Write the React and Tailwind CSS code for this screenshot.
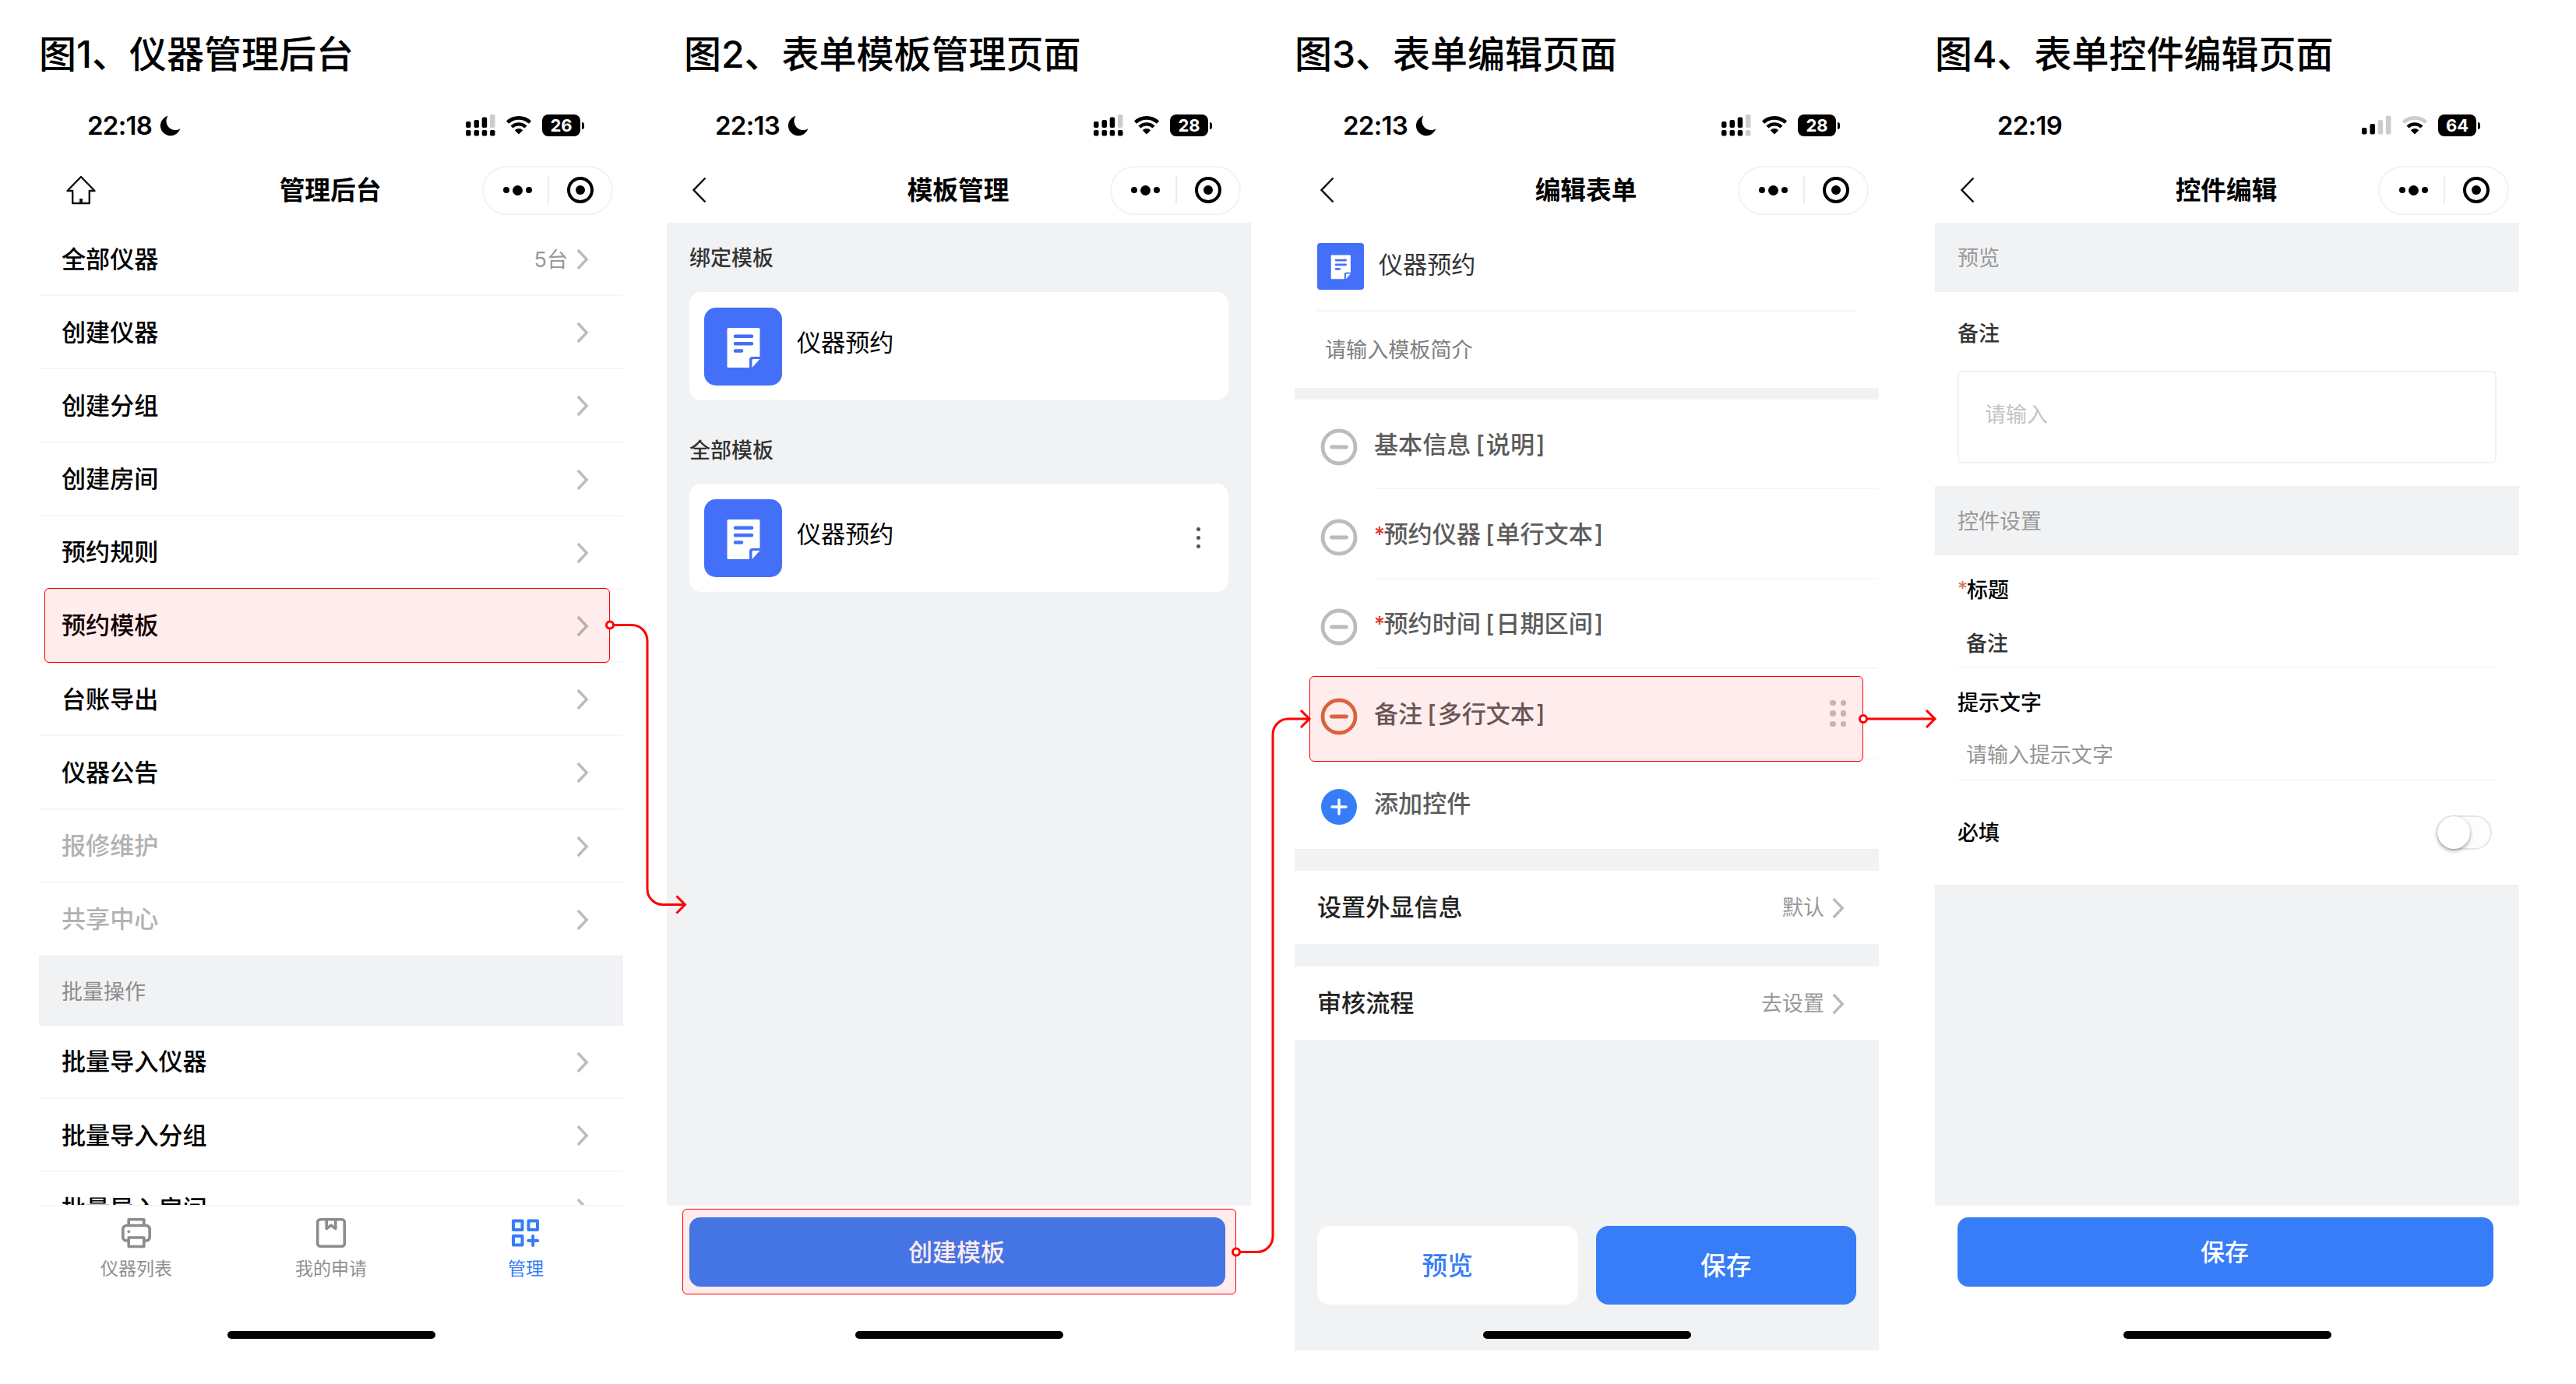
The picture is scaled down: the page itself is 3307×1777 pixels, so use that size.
const CHEVRON_LIST = [
  { label: '全部仪器', extra: '5台' },
  { label: '创建仪器' },
  { label: '创建分组' },
  { label: '创建房间' },
  { label: '预约规则' },
  { label: '预约模板', active: true },
  { label: '台账导出' },
  { label: '仪器公告' },
  { label: '报修维护', disabled: true },
  { label: '共享中心', disabled: true },
];

const BATCH_LIST = ['批量导入仪器', '批量导入分组', '批量导入房间'];

const FIELDS = [
  { name: '基本信息', type: '说明' },
  { name: '预约仪器', type: '单行文本', required: true },
  { name: '预约时间', type: '日期区间', required: true },
  { name: '备注', type: '多行文本', active: true },
];

/* ---------- icons ---------- */

const ChevronRight = () => (
  <svg width="16" height="28" viewBox="0 0 16 28" fill="none" className="shrink-0">
    <path d="M1.800 2 13.200 14 1.800 26" stroke="#bbbbbb" strokeWidth="3.400" />
  </svg>
);

const BackIcon = () => (
  <svg width="20" height="34" viewBox="0 0 20 34" fill="none">
    <path d="M17.5 1.5 2.5 17l15 15.5" stroke="#111" strokeWidth="2.5" />
  </svg>
);

const HomeIcon = () => (
  <svg width="40" height="38" viewBox="0 0 40 38" fill="none" stroke="#111" strokeWidth="2.4" strokeLinejoin="round">
    <path d="M20 2 2.5 20H9.200V36h21.600V20h6.700L20 2Z" />
    <path d="M20 30v6" strokeWidth="3.8" />
  </svg>
);

const MoonIcon = () => (
  <svg width="27" height="27" viewBox="0 0 27 27">
    <path d="M10.5.8A13 13 0 1 0 26.3 17.2 11.6 11.6 0 0 1 10.5.8Z" fill="#000" />
  </svg>
);

const DualSignal = ({ lastDim }) => (
  <svg width="38" height="28" viewBox="0 0 38 28">
    <rect x="0" y="9" width="6.5" height="8" rx="2" />
    <rect x="10.5" y="7" width="6.5" height="10" rx="2" />
    <rect x="20.7" y="3.5" width="6.5" height="13.5" rx="2" />
    <rect x="31" y="0" width="6.5" height="17" rx="2" fill="#cccccc" />
    <rect x="0" y="20" width="6.5" height="7.5" rx="2" />
    <rect x="10.5" y="20" width="6.5" height="7.5" rx="2" />
    <rect x="20.7" y="20" width="6.5" height="7.5" rx="2" />
    <rect x="31" y="20" width="6.5" height="7.5" rx="2" fill={lastDim ? '#cccccc' : '#000'} />
  </svg>
);

const SingleSignal = () => (
  <svg width="38" height="28" viewBox="0 0 38 28">
    <rect x="0" y="17" width="6.5" height="8.5" rx="2" />
    <rect x="10.5" y="12" width="6.5" height="13.5" rx="2" />
    <rect x="20.7" y="7" width="6.5" height="18.5" rx="2" fill="#cccccc" />
    <rect x="31" y="1.5" width="6.5" height="24" rx="2" fill="#cccccc" />
  </svg>
);

const WifiIcon = ({ weak }) => (
  <svg width="34" height="26" viewBox="0 0 34 26" fill="none">
    <path d="M2.5 9.2a21 21 0 0 1 29 0" stroke={weak ? '#cccccc' : '#000'} strokeWidth="4.6" />
    <path d="M8 15a13 13 0 0 1 18 0" stroke="#000" strokeWidth="4.4" />
    <path d="M17 24.5l-5.2-5.3a7.5 7.5 0 0 1 10.4 0L17 24.5Z" fill="#000" />
  </svg>
);

const DocIcon = ({ className }) => (
  <svg viewBox="0 0 100 100" className={className}>
    <path d="M31 26h39a1.5 1.5 0 0 1 1.5 1.5V63H62a4 4 0 0 0-4 4v10H31a1.5 1.5 0 0 1-1.5-1.5v-48A1.5 1.5 0 0 1 31 26Z" fill="#fff" />
    <path d="M61.5 77V67.5a1.5 1.5 0 0 1 1.5-1.5h8.5L61.5 77Z" fill="#fff" />
    <path d="M40 36.8h21M40 46.3h21M40 55.5h8" stroke="#4470f9" strokeWidth="4.6" strokeLinecap="round" />
  </svg>
);

const PrinterIcon = () => (
  <svg width="40" height="40" viewBox="0 0 40 40" fill="none" stroke="#8c8c8c" strokeWidth="3.6" strokeLinejoin="round">
    <path d="M10.2 10.500V2.700h19.600v7.800" />
    <path d="M10.200 30H7.500a4.700 4.700 0 0 1-4.700-4.700V15.200a4.700 4.700 0 0 1 4.700-4.700h25a4.700 4.700 0 0 1 4.700 4.700v10.100a4.700 4.700 0 0 1-4.700 4.700h-2.700" />
    <path d="M10.200 26h19.600v11.500H10.200z" />
    <circle cx="10.300" cy="18.300" r="1.900" fill="#8c8c8c" stroke="none" />
  </svg>
);

const BookmarkIcon = () => (
  <svg width="40" height="40" viewBox="0 0 40 40" fill="none" stroke="#8c8c8c" strokeWidth="3.6" strokeLinejoin="round">
    <rect x="2.700" y="2.700" width="34.600" height="34.600" rx="3.500" />
    <path d="M14.200 3v11.500l5.800-4.200 5.800 4.200V3" />
  </svg>
);

const GridPlusIcon = () => (
  <svg width="40" height="40" viewBox="0 0 40 40" fill="none" stroke="#367df7" strokeWidth="4" strokeLinejoin="round">
    <rect x="4" y="4.5" width="11.5" height="11.5" />
    <rect x="23.5" y="4.5" width="11.5" height="11.5" />
    <rect x="4" y="24" width="11.5" height="11.5" />
    <path d="M29.2 24v12M23.200 30h12" strokeWidth="4" strokeLinecap="round" />
  </svg>
);

const MinusCircle = ({ color }) => (
  <svg width="48" height="48" viewBox="0 0 48 48" fill="none" stroke={color} strokeWidth="4.8">
    <circle cx="24" cy="24" r="21" />
    <path d="M14.5 24h19" strokeLinecap="round" />
  </svg>
);

const PlusCircle = () => (
  <svg width="48" height="48" viewBox="0 0 48 48" fill="none">
    <circle cx="24" cy="24" r="23" fill="#367df7" />
    <path d="M24 15v18M15 24h18" stroke="#fff" strokeWidth="3.4" strokeLinecap="round" />
  </svg>
);

/* ---------- shared pieces ---------- */

const StatusBar = ({ time, battery, moon, single, dimDual }) => (
  <div className={`h-[100px] flex items-center justify-between pr-[50px] ${single ? 'pl-[80px]' : 'pl-[62px]'}`}>
    <div className="flex items-center gap-[10px]">
      <span className="font-[Inter] font-semibold text-[33px] leading-none tracking-[-0.7px]">{time}</span>
      {moon && <MoonIcon />}
    </div>
    <div className="flex items-center">
      {single ? <SingleSignal /> : <DualSignal lastDim={dimDual} />}
      <div className="ml-[13px]"><WifiIcon weak={single} /></div>
      <div className="ml-[13px] w-[49px] h-[28px] rounded-[8px] bg-black flex items-center justify-center">
        <span className="font-[Inter] font-bold text-[22px] leading-none text-white">{battery}</span>
      </div>
      <div className="ml-[2px] w-[3px] h-[9px] rounded-r-full bg-black" />
    </div>
  </div>
);

const NavBar = ({ title, home }) => (
  <div className="h-[75px] pb-[9px] grid grid-cols-[1fr_auto_1fr] items-center">
    <div className={home ? 'pl-[34px]' : 'pl-[32px]'}>{home ? <HomeIcon /> : <BackIcon />}</div>
    <h2 className="-ml-[2px] text-[32.7px] leading-none font-bold">{title}</h2>
    <div className="justify-self-end mr-[13px] w-[168px] h-[63px] rounded-full border-2 border-[#f3f3f3] flex items-center">
      <div className="w-[82px] flex items-center justify-center gap-[4px] pl-[4px]">
        <span className="size-[8px] rounded-full bg-black" />
        <span className="size-[13px] rounded-full bg-black" />
        <span className="size-[8px] rounded-full bg-black" />
      </div>
      <div className="w-[2px] h-[36px] bg-[#ececec]" />
      <div className="flex-1 flex justify-center pr-px">
        <div className="size-[34px] rounded-full border-4 border-black flex items-center justify-center">
          <span className="size-[12px] rounded-full bg-black" />
        </div>
      </div>
    </div>
  </div>
);

const HomeIndicator = () => (
  <div className="mt-auto mb-[15px] mx-auto w-[267px] h-[10px] rounded-full bg-black shrink-0" />
);

const Screen = ({ caption, captionClass = '', screenClass = '', status, nav, children }) => (
  <section className="w-[750px] shrink-0">
    <h1 className={`h-[111px] pt-[46px] text-[48px] leading-none font-medium whitespace-nowrap ${captionClass}`}>{caption}</h1>
    <div className={`h-[1623px] flex flex-col ${screenClass}`}>
      <div className="bg-white">
        <StatusBar {...status} />
        <NavBar {...nav} />
      </div>
      {children}
    </div>
  </section>
);

const ListRow = ({ label, extra, disabled, active }) => (
  <div className="relative h-[94.2px] shrink-0 border-b-2 border-[#f6f6f6] pt-[2px] pl-[29px] pr-[44px] flex items-center justify-between">
    <span className={`text-[31.1px] leading-none font-medium ${disabled ? 'text-[#b2b2b2]' : 'text-black'}`}>{label}</span>
    <div className="flex items-center gap-[11px]">
      {extra && <span className="text-[27px] leading-none text-[#999999]">{extra}</span>}
      <ChevronRight />
    </div>
    {active && <div className="absolute left-[7px] -top-[2px] w-[726px] h-[96px] rounded-[6px] border-[1.5px] border-[#ff0000] bg-[#ff0000]/[0.075]" />}
  </div>
);

const TemplateCard = ({ menu }) => (
  <div className="mx-[29px] h-[139px] rounded-[15px] bg-white flex items-center pl-[19px] pr-[36px]">
    <DocIcon className="size-[100px] rounded-[15px] bg-[#4470f9]" />
    <span className="ml-[19px] pb-[8px] text-[31.1px] leading-none">仪器预约</span>
    {menu && (
      <div className="ml-auto flex flex-col gap-[6px]">
        <span className="size-[5px] rounded-full bg-[#555]" />
        <span className="size-[5px] rounded-full bg-[#555]" />
        <span className="size-[5px] rounded-full bg-[#555]" />
      </div>
    )}
  </div>
);

const PrimaryButton = ({ children }) => (
  <button className="block ml-[29px] w-[688px] h-[89px] pr-[2px] rounded-[14px] bg-[#367df7] text-white text-[31px] leading-none font-medium">
    {children}
  </button>
);

/* ---------- screens ---------- */

const AdminScreen = () => (
  <Screen caption="图1、仪器管理后台" status={{ time: '22:18', battery: 26, moon: true }} nav={{ title: '管理后台', home: true }}>
    <div className="h-[1261px] shrink-0 overflow-hidden">
      {CHEVRON_LIST.map(row => <ListRow key={row.label} {...row} />)}
      <div className="h-[89px] bg-[#f1f2f4] pt-[2px] pl-[29px] flex items-center text-[27px] leading-none text-[#8c8c8c]">批量操作</div>
      {BATCH_LIST.map(label => <ListRow key={label} label={label} />)}
    </div>
    <div className="border-t-2 border-[#f6f6f6] pt-[14px] grid grid-cols-3 text-[23px] leading-none text-[#8f8f8f]">
      <div className="flex flex-col items-center gap-[15px]"><PrinterIcon />仪器列表</div>
      <div className="flex flex-col items-center gap-[15px]"><BookmarkIcon />我的申请</div>
      <div className="flex flex-col items-center gap-[15px] text-[#367df7]"><GridPlusIcon />管理</div>
    </div>
    <HomeIndicator />
  </Screen>
);

const TemplateScreen = () => (
  <Screen
    caption="图2、表单模板管理页面"
    captionClass="pl-[22px]"
    status={{ time: '22:13', battery: 28, moon: true }}
    nav={{ title: '模板管理' }}
  >
    <div className="h-[1262px] shrink-0 bg-[#f1f2f4]">
      <h3 className="h-[89px] pt-[2px] pl-[29px] flex items-center text-[27px] leading-none font-medium text-[#333]">绑定模板</h3>
      <TemplateCard />
      <h3 className="mt-[19px] h-[88px] pt-[2px] pl-[29px] flex items-center text-[27px] leading-none font-medium text-[#333]">全部模板</h3>
      <TemplateCard menu />
    </div>
    <div className="relative pt-[15px]">
      <PrimaryButton>创建模板</PrimaryButton>
      <div className="absolute left-[20px] top-[4px] w-[711px] h-[110px] rounded-[6px] border-[1.5px] border-[#ff0000] bg-[#ff0000]/[0.075]" />
    </div>
    <HomeIndicator />
  </Screen>
);

const FieldRow = ({ name, type, required, active }) => (
  <div className="relative h-[115.4px] pl-[33px] flex items-center">
    <div className="pt-[7px]"><MinusCircle color={active ? '#d66b42' : '#bcbcbc'} /></div>
    <div className="ml-[21px] h-full flex-1 mr-[2px] pt-[3px] border-b-2 border-[#f7f7f7] flex items-center text-[31.1px] leading-none font-medium text-[#5c5c5c]">
      {required && <span className="w-[12.5px] text-[27px] text-[#e93323]">*</span>}
      <span>{name}</span>
      <span className="ml-[6px] mr-[2px]">[</span>
      <span>{type}</span>
      <span className="ml-[2px]">]</span>
      {active && (
        <div className="ml-auto mr-[40px] pb-[3px] grid grid-cols-2 gap-[6px]">
          {[0, 1, 2, 3, 4, 5].map(i => <span key={i} className="size-[7.5px] rounded-full bg-[#c4c0c0]" />)}
        </div>
      )}
    </div>
    {active && <div className="absolute left-[19px] top-[9px] w-[711px] h-[110px] rounded-[6px] border-[1.5px] border-[#ff0000] bg-[#ff0000]/[0.075]" />}
  </div>
);

const SettingRow = ({ label, value }) => (
  <div className="h-[94px] bg-white pt-[2px] pl-[29px] pr-[44px] flex items-center justify-between">
    <span className="text-[31.1px] leading-none font-medium text-[#222]">{label}</span>
    <div className="flex items-center gap-[10px]">
      <span className="text-[27px] leading-none text-[#999999]">{value}</span>
      <ChevronRight />
    </div>
  </div>
);

const FormScreen = () => (
  <Screen
    caption="图3、表单编辑页面"
    screenClass="bg-[#f1f2f4]"
    status={{ time: '22:13', battery: 28, moon: true, dimDual: true }}
    nav={{ title: '编辑表单' }}
  >
    <div className="h-[212px] bg-white px-[29px]">
      <div className="h-[114px] border-b-2 border-[#f5f5f5] flex items-center">
        <DocIcon className="size-[60px] rounded-[4px] bg-[#4470f9]" />
        <span className="ml-[19px] pb-[2px] text-[31.1px] leading-none text-[#333]">仪器预约</span>
      </div>
      <div className="h-[98px] pt-[2px] pl-[10px] flex items-center text-[27.1px] leading-none text-[#808080]">请输入模板简介</div>
    </div>
    <div className="mt-[15px] bg-white">
      {FIELDS.map(field => <FieldRow key={field.name} {...field} />)}
      <div className="h-[115.4px] pl-[33px] flex items-center">
        <div className="pt-[7px]"><PlusCircle /></div>
        <span className="ml-[21px] text-[31.1px] leading-none font-medium text-[#5c5c5c]">添加控件</span>
      </div>
    </div>
    <div className="mt-[28px] flex flex-col gap-[29px]">
      <SettingRow label="设置外显信息" value="默认" />
      <SettingRow label="审核流程" value="去设置" />
    </div>
    <div className="mt-[239px] px-[29px] flex gap-[23px] text-[32.7px] leading-none font-medium">
      <button className="w-[335px] h-[101px] pt-px rounded-[16px] bg-white text-[#367df7]">预览</button>
      <button className="w-[335px] h-[101px] pt-px rounded-[16px] bg-[#367df7] text-white">保存</button>
    </div>
    <HomeIndicator />
  </Screen>
);

const ControlScreen = () => (
  <Screen caption="图4、表单控件编辑页面" status={{ time: '22:19', battery: 64, single: true }} nav={{ title: '控件编辑' }}>
    <div className="h-[1262px] shrink-0 bg-[#f1f2f4] text-[27px] leading-none">
      <div className="h-[89px] pt-[2px] pl-[29px] flex items-center text-[#999999]">预览</div>
      <div className="h-[249px] bg-white px-[29px] pt-[40px]">
        <div className="font-medium text-[#333]">备注</div>
        <div className="mt-[34px] h-[119px] rounded-[6px] border-2 border-[#f2f2f2] pl-[33px] pt-[41px] text-[#c4c4c4]">请输入</div>
      </div>
      <div className="h-[89px] pt-[2px] pl-[29px] flex items-center text-[#999999]">控件设置</div>
      <div className="h-[423px] bg-white px-[29px] pt-[31px] font-medium">
        <div className="flex"><span className="w-[12px] text-[25px] text-[#d9774f]">*</span>标题</div>
        <div className="mt-[42px] pl-[11px] pb-[16px] border-b-2 border-[#f7f7f7] text-[#333]">备注</div>
        <div className="mt-[31px]">提示文字</div>
        <div className="mt-[40px] pl-[11px] pb-[17px] border-b-2 border-[#f7f7f7] font-normal text-[#959595]">请输入提示文字</div>
        <div className="mt-[45px] pr-[6px] flex items-center justify-between">
          <span>必填</span>
          <div className="w-[71px] h-[44px] rounded-full border-2 border-[#e6e6e6] bg-[#fdfdfd] flex items-center">
            <span className="-ml-px size-[42px] rounded-full bg-white shadow-[0_2px_5px_rgba(0,0,0,0.4)]" />
          </div>
        </div>
      </div>
    </div>
    <div className="pt-[15px]">
      <PrimaryButton>保存</PrimaryButton>
    </div>
    <HomeIndicator />
  </Screen>
);

// red arrows that link one screen to the next
const Connectors = () => (
  <svg width="3307" height="1777" viewBox="0 0 3307 1777" fill="none" stroke="#ff0000" strokeWidth="3" className="absolute left-0 top-0 pointer-events-none">
    <path d="M788 802.5h23a20 20 0 0 1 20 20v319a20 20 0 0 0 20 20h28" />
    <path d="M868.5 1150.5l11 11-11 11" />
    <path d="M1592 1607.5h22a20 20 0 0 0 20-20V943a20 20 0 0 1 20-20h27" />
    <path d="M1670 912l11 11-11 11" />
    <path d="M2397 923h87" />
    <path d="M2473 912l11 11-11 11" />
    <circle cx="783" cy="802.5" r="4.5" fill="#fff" />
    <circle cx="1587" cy="1607.5" r="4.5" fill="#fff" />
    <circle cx="2392" cy="923" r="4.5" fill="#fff" />
  </svg>
);

const App = () => (
  <main className="relative w-[3307px] h-[1777px] overflow-hidden bg-white text-black pl-[50px] flex font-[Inter,'Noto_Sans_CJK_SC',sans-serif]">
    <AdminScreen />
    <div className="w-[56px] shrink-0" />
    <TemplateScreen />
    <div className="w-[56px] shrink-0" />
    <FormScreen />
    <div className="w-[72px] shrink-0" />
    <ControlScreen />
    <Connectors />
  </main>
);

export default App;
